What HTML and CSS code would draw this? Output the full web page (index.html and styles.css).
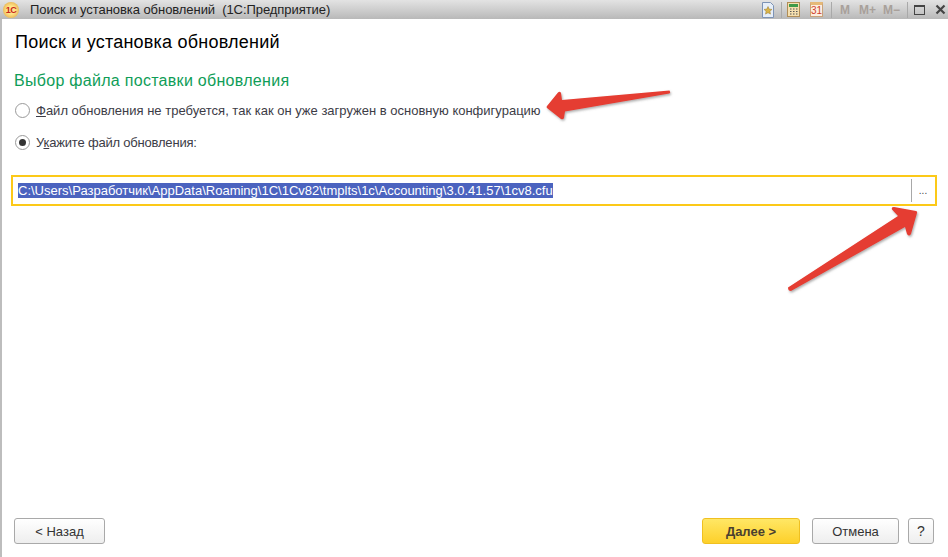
FILE: index.html
```html
<!DOCTYPE html>
<html lang="ru">
<head>
<meta charset="utf-8">
<title>Поиск и установка обновлений</title>
<link rel="stylesheet" href="styles.css">
</head>
<body>
<header class="titlebar">
  <span class="logo">1С</span>
  <span class="title">Поиск и установка обновлений&nbsp; (1С:Предприятие)</span>
  <div class="tools">
    <svg class="tool" width="14" height="16" viewBox="0 0 14 16"><path d="M1.500.5h8l3 3v12h-11z" fill="#e6eef8" stroke="#7d93b5"/><path d="M7 4.500l1.200 2.600 2.800.3-2.100 1.900.6 2.800L7 10.700l-2.500 1.400.6-2.800L3 7.400l2.800-.3z" fill="#d9b44a" stroke="#9a7a2a" stroke-width=".5"/></svg>
    <i class="sep"></i>
    <svg class="tool" width="13" height="15" viewBox="0 0 13 15"><rect x=".5" y=".5" width="12" height="14" fill="#f5dfae" stroke="#b08d56"/><rect x="2" y="2" width="9" height="3" fill="#3f9a4a"/><path d="M3 7h1.500M6 7h1.500M9 7h1.500M3 9.500h1.500M6 9.500h1.500M9 9.500h1.500M3 12h1.500M6 12h1.500M9 12h1.500" stroke="#555" stroke-width="1.200"/></svg>
    <span class="cal">31</span>
    <i class="sep"></i>
    <span class="mem m1">M</span><span class="mem m2">M+</span><span class="mem m3">M−</span>
    <i class="sep"></i>
    <span class="maximize"></span>
    <svg class="close" width="11" height="11" viewBox="0 0 11 11"><path d="M1.500 1.500l8 8M9.500 1.500l-8 8" stroke="#444" stroke-width="2.200"/></svg>
  </div>
</header>

<main class="form">
  <h1 class="page-title">Поиск и установка обновлений</h1>
  <h2 class="section-title">Выбор файла поставки обновления</h2>
  <div class="radio-row first">
    <span class="radio"></span>
    <span class="radio-label"><u>Ф</u>айл обновления не требуется, так как он уже загружен в основную конфигурацию</span>
  </div>
  <div class="radio-row second">
    <span class="radio checked"></span>
    <span class="radio-label tight">У<u>к</u>ажите файл обновления:</span>
  </div>
  <div class="file-input">
    <span class="file-text"><span class="selected">C:\Users\Разработчик\AppData\Roaming\1C\1Cv82\tmplts\1c\Accounting\3.0.41.57\1cv8.cfu</span></span>
    <span class="choose">...</span>
  </div>
  <footer class="actions">
    <button class="btn back">&lt; Назад</button>
    <span class="spacer"></span>
    <button class="btn next">Далее &gt;</button>
    <button class="btn cancel">Отмена</button>
    <button class="btn help">?</button>
  </footer>
</main>

<svg class="arrows" width="948" height="557" viewBox="0 0 948 557">
  <defs><filter id="s" x="-10%" y="-10%" width="120%" height="130%"><feDropShadow dx="1" dy="1.500" stdDeviation=".8" flood-color="#666" flood-opacity=".55"/></filter></defs>
  <path filter="url(#s)" d="M669.500 90.500Q671 92.500 669.500 93.500L565 111.500 564 118Q563 120 561 119L547 108Q546 107 547 106L558 92.500Q560 91 561 93L562 100z" fill="#e53c30"/>
  <path filter="url(#s)" d="M788 287.500L898 216 892 209.500Q891 207 894 207L916 211Q917.500 211.500 917 213L911 234Q909 237 907 234L905 227 791 291Q788 291 788 287.500z" fill="#e53c30"/>
</svg>
</body>
</html>
```
FILE: styles.css
```css
* { box-sizing: border-box; }
html, body { margin: 0; height: 100%; }
body {
  width: 948px;
  height: 557px;
  overflow: hidden;
  display: flex;
  flex-direction: column;
  position: relative;
  background: #fff;
  font-family: "Liberation Sans", Arial, sans-serif;
  color: #3c3c46;
}
.titlebar {
  height: 19px;
  flex: none;
  display: flex;
  align-items: center;
  padding-left: 3px;
  background: linear-gradient(#e3e3e3, #c6c6c6 70%, #b8b8b8);
  font-size: 13px;
  color: #222;
}
.logo {
  width: 16px;
  height: 16px;
  border-radius: 50%;
  background: radial-gradient(circle, #ffe58a 35%, #e8b04e 80%, #b08a50);
  color: #c8261c;
  font-size: 9px;
  font-weight: bold;
  line-height: 16px;
  text-align: center;
  letter-spacing: -.5px;
}
.title { margin-left: 11px; letter-spacing: -.06px; white-space: pre; }
.tools { margin-left: auto; display: flex; align-items: center; height: 19px; padding-right: 2px; }
.tool { display: block; flex: none; }
.tools > svg:first-child { margin-right: 6px; }
.sep { width: 1px; height: 16px; background: #a9a9a9; flex: none; }
.tools > svg:nth-child(3) { margin: 0 10px 0 5px; }
.cal {
  width: 13px;
  height: 15px;
  margin-right: 8px;
  border: 1px solid #c9a27a;
  border-top: 3px solid #e6b978;
  background: #fbeee0;
  color: #d0402a;
  font-size: 10px;
  line-height: 11px;
  text-align: center;
}
.mem { color: #a8a09a; font-size: 12px; font-weight: bold; }
.m1 { margin-left: 8px; }
.m2 { margin-left: 9px; }
.m3 { margin-left: 7px; margin-right: 7px; }
.maximize {
  width: 11px;
  height: 10px;
  margin-left: 6px;
  border: 1px solid #444;
  border-top-width: 2px;
}
.close { margin-left: 10px; }

.form {
  flex: 1;
  display: flex;
  flex-direction: column;
  border-left: 2px solid #bdbdbd;
  padding: 0 11px 13px 9px;
}
.page-title {
  margin: 12px 0 0 4px;
  font-size: 18px;
  line-height: 22px;
  letter-spacing: .22px;
  font-weight: normal;
  color: #000;
}
.section-title {
  margin: 18px 0 0 3px;
  font-size: 16px;
  line-height: 19px;
  letter-spacing: .29px;
  font-weight: normal;
  color: #0f9d58;
}
.radio-row { display: flex; align-items: center; margin-left: 4px; height: 16px; font-size: 13px; }
.radio-row.first { margin-top: 12px; }
.radio-row.second { margin-top: 16px; }
.radio {
  width: 15px;
  height: 15px;
  margin-right: 6px;
  border: 1px solid #9a9a9a;
  border-radius: 50%;
  background: #fff;
  display: flex;
  align-items: center;
  justify-content: center;
  flex: none;
}
.radio.checked::after {
  content: "";
  width: 7px;
  height: 7px;
  border-radius: 50%;
  background: #333;
}
.radio-label { white-space: nowrap; }
.radio-label.tight { letter-spacing: -.2px; }
.file-input {
  margin-top: 25px;
  height: 31px;
  display: flex;
  align-items: center;
  border: 2px solid #fcc918;
  padding-left: 5px;
  font-size: 13px;
  color: #fff;
}
.file-text { flex: 1; white-space: nowrap; }
.selected { background: #4b63bf; padding: 0; }
.choose {
  width: 23px;
  height: 23px;
  margin-right: 1px;
  border-left: 1px solid #a8a8a8;
  color: #444;
  text-align: center;
  font-size: 10px;
  line-height: 24px;
}
.actions { margin-top: auto; display: flex; align-items: center; gap: 9px; padding: 0 3px; }
.spacer { flex: 1; }
.btn {
  height: 26px;
  padding: 0;
  border: 1px solid #a9a9a9;
  border-radius: 3px;
  background: linear-gradient(#fff, #eee);
  font-family: inherit;
  font-size: 13px;
  color: #333;
}
.back { width: 91px; }
.next {
  width: 98px;
  margin-right: 3px;
  border-color: #f0c020;
  background: linear-gradient(#ffe765, #fdd02a);
  font-weight: bold;
  color: #4a4030;
}
.cancel { width: 87px; }
.help { width: 26px; font-size: 14px; }
.arrows { position: absolute; left: 0; top: 0; pointer-events: none; }
```
